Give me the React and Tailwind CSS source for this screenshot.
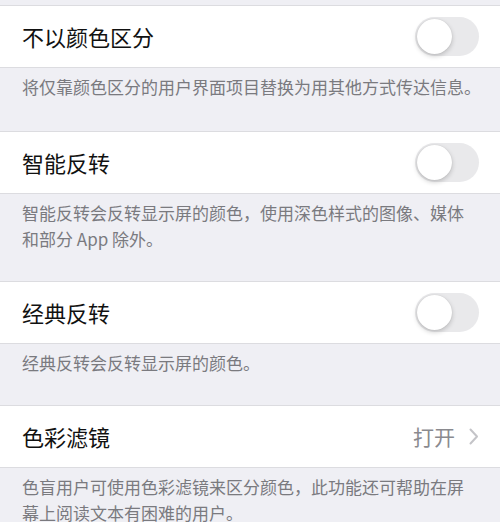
const Toggle = () => (
  <div className="relative w-[64px] h-[39px] rounded-full bg-[#e9e9eb] shrink-0">
    <div className="absolute left-[2px] top-[2px] w-[35px] h-[35px] rounded-full bg-white shadow-[0_2px_5px_rgba(0,0,0,0.2),0_0_1px_rgba(0,0,0,0.15)]" />
  </div>
);

const Row = ({ title, right }) => (
  <div className="h-[63px] bg-white border-y border-[#dcdce0] flex items-center justify-between pl-[22px] pr-[21px]">
    <span className="text-[22px] text-[#111]">{title}</span>
    {right}
  </div>
);

const Footer = ({ lines, pb = 'pb-[29px]' }) => (
  <div className={`pt-[6px] ${pb} pl-[22px] pr-[10px] text-[17px] leading-[26px] text-[#7a7a7f] whitespace-nowrap`}>
    {lines.map((l, i) => (
      <div key={i}>{l}</div>
    ))}
  </div>
);

export default function App() {
  return (
    <div
      className="w-[500px] h-[522px] overflow-hidden bg-[#efeff4]"
      style={{ fontFamily: '"Noto Sans CJK SC", "Noto Sans", sans-serif' }}
    >
      <div className="h-[5px]" />
      <Row title="不以颜色区分" right={<Toggle />} />
      <Footer lines={['将仅靠颜色区分的用户界面项目替换为用其他方式传达信息。']} pb="pb-[31px]" />

      <Row title="智能反转" right={<Toggle />} />
      <Footer
        lines={['智能反转会反转显示屏的颜色，使用深色样式的图像、媒体', '和部分 App 除外。']}
        pb="pb-[29px]"
      />

      <Row title="经典反转" right={<Toggle />} />
      <Footer lines={['经典反转会反转显示屏的颜色。']} pb="pb-[29px]" />

      <Row
        title="色彩滤镜"
        right={
          <div className="flex items-center gap-[14px]">
            <span className="text-[21px] text-[#8a8a8f]">打开</span>
            <svg width="10" height="17" viewBox="0 0 10 17" fill="none">
              <path d="M1.5 1.5 L8 8.5 L1.5 15.5" stroke="#c4c4c8" strokeWidth="2" strokeLinecap="round" strokeLinejoin="round" />
            </svg>
          </div>
        }
      />
      <Footer lines={['色盲用户可使用色彩滤镜来区分颜色，此功能还可帮助在屏', '幕上阅读文本有困难的用户。']} />
    </div>
  );
}
